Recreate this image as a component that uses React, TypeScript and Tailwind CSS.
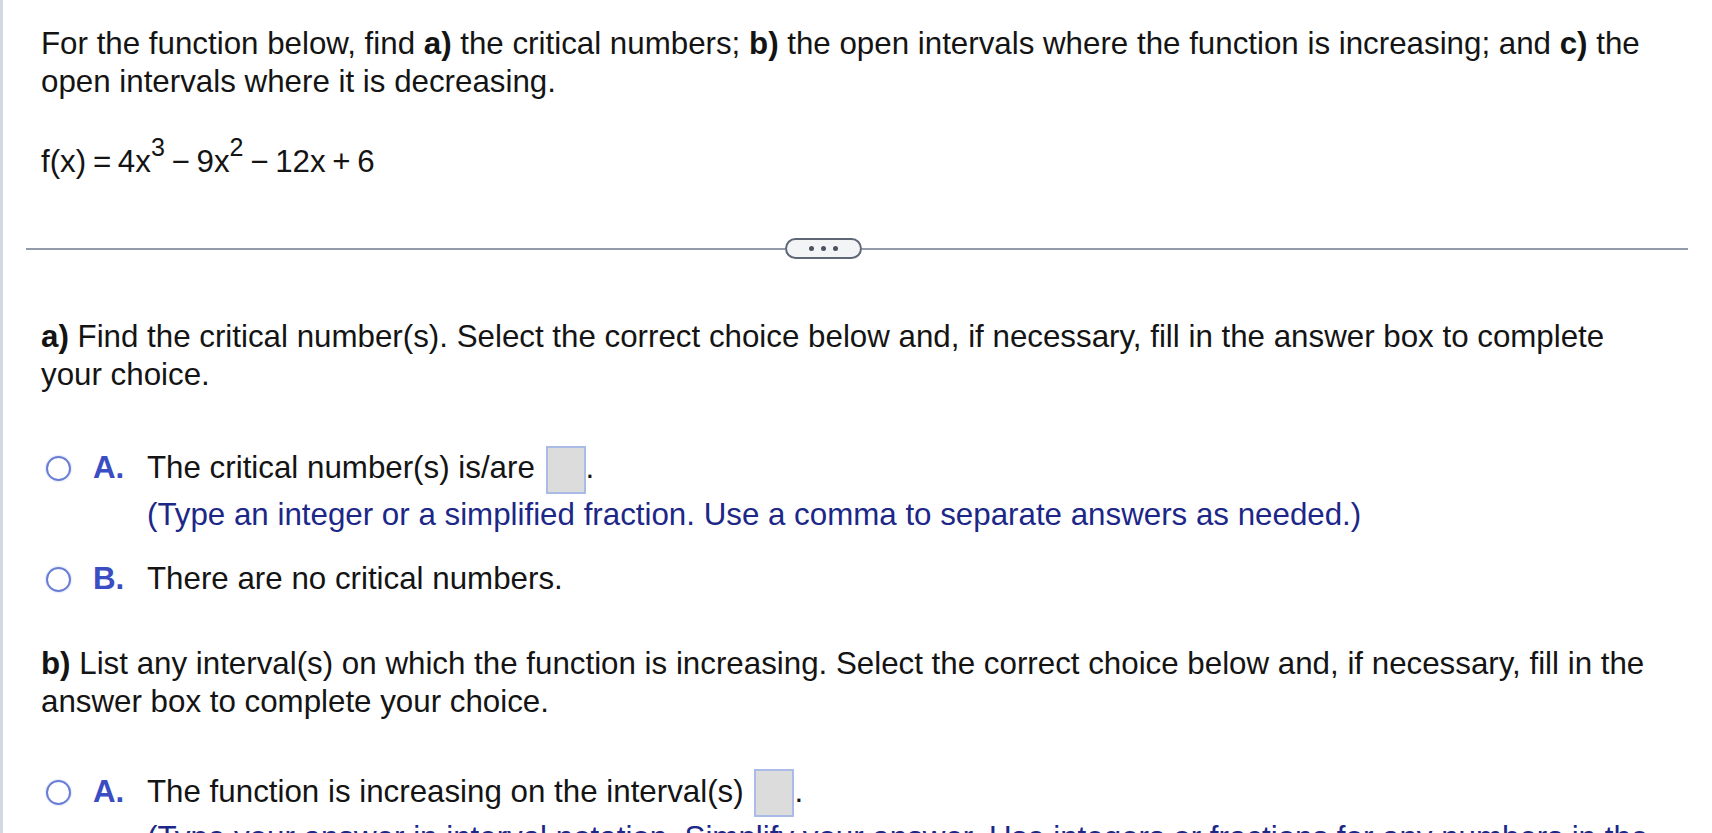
import React from 'react'

const font = "font-['Liberation_Sans',Arial,Helvetica,sans-serif]"

function Radio() {
  return (
    <span className="mt-[7px] ml-[5px] block h-[25px] w-[25px] shrink-0 rounded-full border-2 border-[#6a7dd4] shadow-[0_0_2px_#aab6ec]" />
  )
}

function AnswerBox() {
  return (
    <span className="ml-[2px] -my-[5px] inline-block h-[48px] w-[40px] border-2 border-[#aabbe8] bg-[#dcdcdc] align-middle" />
  )
}

function Choice({ letter, children, hint }: { letter: string; children: React.ReactNode; hint?: string }) {
  return (
    <div className="flex items-start">
      <Radio />
      <span className="ml-[22px] w-[54px] shrink-0 font-bold text-[#3a4dc2]">{letter}</span>
      <div>
        <div>{children}</div>
        {hint && <div className="mt-[7px] text-[#1c2788]">{hint}</div>}
      </div>
    </div>
  )
}

export default function App() {
  return (
    <div className={`h-[833px] overflow-hidden border-l-[3px] border-[#d4d8e4] bg-white text-[31.3px] leading-[38px] text-[#141414] ${font}`}>
      {/* 問題文 */}
      <div className="pl-[38px] pr-[50px] pt-[25px]">
        <p>
          For the function below, find <b>a)</b> the critical numbers; <b>b)</b> the open intervals where the function is
          increasing; and <b>c)</b> the open intervals where it is decreasing.
        </p>
        <p className="mt-[42px] [word-spacing:-2px]">
          f(x) = 4x<sup className="top-[-0.62em] text-[80%]">3</sup> − 9x<sup className="top-[-0.62em] text-[80%]">2</sup> − 12x + 6
        </p>
      </div>

      {/* 区切り */}
      <div className="ml-[23px] mt-[57px] flex w-[1662px] items-center">
        <div className="h-[2px] w-[759px] bg-[#939aa9]" />
        <div className="flex h-[21px] w-[77px] items-center justify-center gap-[7px] rounded-full border-2 border-[#5d6775] bg-[#f3f4f6]">
          <span className="h-[5px] w-[5px] rounded-full bg-[#4b5260]" />
          <span className="h-[5px] w-[5px] rounded-full bg-[#4b5260]" />
          <span className="h-[5px] w-[5px] rounded-full bg-[#4b5260]" />
        </div>
        <div className="h-[2px] flex-1 bg-[#939aa9]" />
      </div>

      <div className="pl-[38px] pr-[50px]">
        {/* a) */}
        <p className="mt-[59px]">
          <b>a)</b> Find the critical number(s). Select the correct choice below and, if necessary, fill in the answer box
          to complete your choice.
        </p>
        <div className="mt-[55px]">
          <Choice letter="A." hint="(Type an integer or a simplified fraction. Use a comma to separate answers as needed.)">
            The critical number(s) is/are <AnswerBox />.
          </Choice>
        </div>
        <div className="mt-[26px]">
          <Choice letter="B.">There are no critical numbers.</Choice>
        </div>

        {/* b) */}
        <p className="mt-[47px]">
          <b>b)</b> List any interval(s) on which the function is increasing. Select the correct choice below and, if
          necessary, fill in the answer box to complete your choice.
        </p>
        <div className="mt-[52px]">
          <Choice
            letter="A."
            hint="(Type your answer in interval notation. Simplify your answer. Use integers or fractions for any numbers in the expression.)"
          >
            The function is increasing on the interval(s) <AnswerBox />.
          </Choice>
        </div>
      </div>
    </div>
  )
}
